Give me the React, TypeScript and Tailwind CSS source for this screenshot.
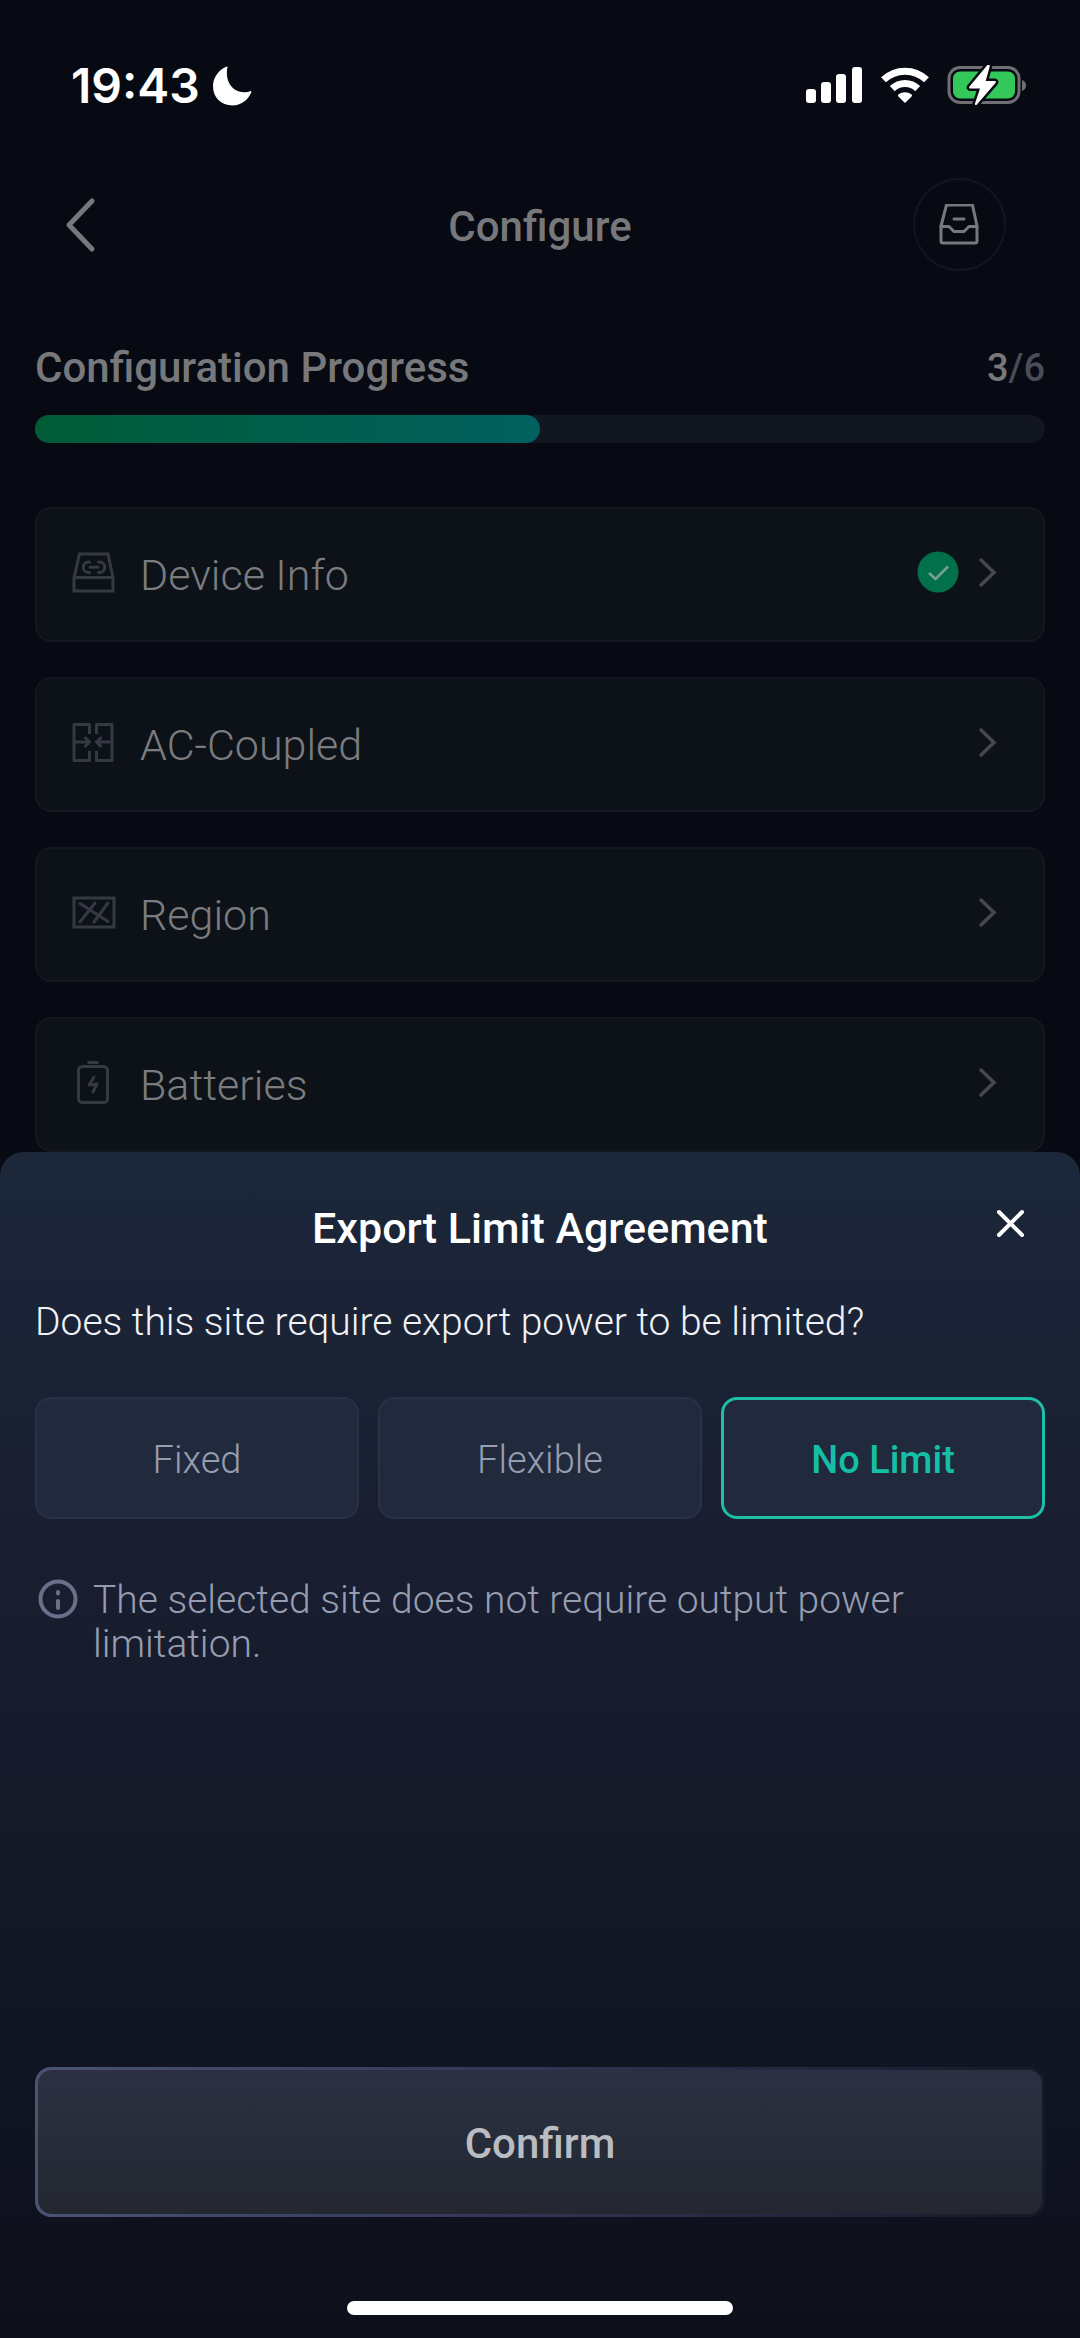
import { useState } from "react";
import type { ReactNode } from "react";
import clsx from "clsx";

const steps = [
	{ label: "Device Info", icon: <DeviceIcon />, done: true },
	{ label: "AC-Coupled", icon: <CoupledIcon />, done: false },
	{ label: "Region", icon: <RegionIcon />, done: false },
	{ label: "Batteries", icon: <BatteryIcon />, done: false },
];

const limits = ["Fixed", "Flexible", "No Limit"];

function StatusBar() {
	return (
		<div className="flex items-center justify-between pt-14 pl-[71px] pr-[53px] h-[116px] text-white">
			<div className="flex items-center gap-3">
				<span className="font-[Inter,sans-serif] text-[48px] leading-[60px] font-semibold">
					19:43
				</span>
				<svg width="40" height="40" viewBox="0 0 40 40" aria-label="Do not disturb">
					<path
						d="M15.5 1C13 13 18 25.5 32 26.3c2.500 0 4.500-.5 6-1.100 1-.3 1.600.3 1.200 1.300C36 34 29 39.500 20.500 39.500 9 39.500 1 31 1 20.500 1 12 6 4.500 13.600 1c1.200-.6 2.200-.9 1.900 0z"
						fill="currentColor"
					/>
				</svg>
			</div>
			<div className="flex items-center gap-4">
				<svg width="58" height="40" viewBox="0 0 58 40" fill="currentColor" aria-label="Signal">
					<rect x="1" y="23" width="10" height="14" rx="3" />
					<rect x="16" y="16" width="10" height="21" rx="3" />
					<rect x="31" y="8" width="10" height="29" rx="3" />
					<rect x="47" y="1" width="10" height="36" rx="3" />
				</svg>
				<svg width="52" height="40" viewBox="-1 0 52 40" aria-label="Wi-Fi">
					<g fill="none" stroke="currentColor" strokeWidth="7">
						<path d="M3.500 13.800a31 31 0 0 1 43 0" />
						<path d="M12.300 22.600a18.500 18.500 0 0 1 25.400 0" />
					</g>
					<path
						d="M25 37l-6.600-6.600c-.6-.6-.6-1.300 0-1.800a10.500 10.500 0 0 1 13.200 0c.6.5.6 1.200 0 1.800z"
						fill="currentColor"
					/>
				</svg>
				<svg width="80" height="42" viewBox="0 0 80 42" aria-label="Battery charging">
					<rect x="2" y="2.500" width="70" height="35" rx="11" fill="none" stroke="#6f6f74" strokeWidth="3" />
					<path d="M75 15c3 1 4 3 4 5.500s-1 4.500-4 5.500z" fill="#6f6f74" />
					<rect x="6" y="6.500" width="62" height="27" rx="7" fill="#34c759" />
					<path
						d="M40 .5L22.500 21.500c-.8 1-.4 2 .8 2H33l-5 15c-.5 1.500.9 2.200 1.900 1L48.500 18c.8-1 .4-2-.8-2h-9l4-14.500c.4-1.600-1.500-2.500-2.700-1z"
						fill="#fff"
						stroke="#070a12"
						strokeWidth="5"
						paintOrder="stroke"
						strokeLinejoin="round"
					/>
				</svg>
			</div>
		</div>
	);
}

function StepIcon({ children }: { children: ReactNode }) {
	return (
		<svg
			width="48"
			height="48"
			viewBox="0 0 48 48"
			fill="none"
			stroke="#353944"
			strokeWidth="3"
			aria-hidden="true"
		>
			{children}
		</svg>
	);
}

function DeviceIcon() {
	return (
		<StepIcon>
			<path d="M9.500 3h28.500l5 24v13H4V27z M4 26.500h39" />
			<path
				d="M19.500 11h-1a5 5 0 0 0 0 10.500h1M28.500 11h1a5 5 0 0 1 0 10.500h-1M20 16.200h8"
				strokeLinecap="round"
			/>
		</StepIcon>
	);
}

function CoupledIcon() {
	return (
		<StepIcon>
			<path
				d="M19.500 13V3.500H4v36h15.500v-9.500M26.500 13V3.500H42v36H26.500v-9.500M4 21h15M42 21H27M14.500 16L19.500 21l-5 5M31.500 16L26.500 21l5 5"
				strokeLinejoin="round"
			/>
		</StepIcon>
	);
}

function RegionIcon() {
	return (
		<StepIcon>
			<path d="M4 7h40v29H4z" />
			<path d="M10 12.500l28 18M25 12L10 31M38 12L24 31" strokeLinecap="round" />
		</StepIcon>
	);
}

function BatteryIcon() {
	return (
		<StepIcon>
			<rect x="8.500" y="5.500" width="29" height="36" rx="4" />
			<path d="M17.500 1.500h11" />
			<path d="M24 16l-5 8 8-1-4 8" strokeLinecap="round" strokeLinejoin="round" />
		</StepIcon>
	);
}

export default function App() {
	const [limit, setLimit] = useState("No Limit");

	return (
		<div className="flex flex-col min-h-screen bg-[#070a12] font-[Roboto,sans-serif]">
			<StatusBar />

			<header className="flex items-center justify-between pt-[62px] pl-[57px] pr-[74px] text-[#77787b]">
				<button type="button" aria-label="Back" className="w-[110px]">
					<svg width="48" height="60" viewBox="0 0 48 60" fill="none">
						<path
							d="M35 6L12 30l23 24"
							stroke="currentColor"
							strokeWidth="5"
							strokeLinecap="round"
							strokeLinejoin="round"
						/>
					</svg>
				</button>
				<h1 className="pt-1 text-[42px] leading-[48px] font-medium">Configure</h1>
				<button
					type="button"
					aria-label="Inbox"
					className="flex items-center justify-center size-[93px] border-2 border-[#121520] rounded-full"
				>
					<svg width="42" height="42" viewBox="1 1 42 42" fill="none" stroke="currentColor" strokeWidth="3" strokeLinecap="round" strokeLinejoin="round">
						<path d="M8.500 2h26l4.500 21v15a2 2 0 0 1-2 2H5a2 2 0 0 1-2-2V23z" />
						<path d="M3 23.500h8l5 5h10l5-5h8M16 16h10" />
					</svg>
				</button>
			</header>

			<main className="px-[35px] pt-[68px]">
				<div className="flex items-center justify-between h-[58px] font-medium text-[#77787b]">
					<h2 id="progress" className="text-[42px] leading-[48px]">
						Configuration Progress
					</h2>
					<p className="text-[38px] leading-[48px] text-[#4a4d55]">
						<span className="text-[#77787b]">3</span>/6
					</p>
				</div>
				<div
					role="progressbar"
					aria-labelledby="progress"
					aria-valuenow={3}
					aria-valuemax={6}
					className="h-7 mt-[18px] rounded-full bg-[#121620]"
				>
					<div className="w-1/2 h-full rounded-full bg-linear-to-r from-[#005c36] to-[#02605f]"></div>
				</div>

				<div className="flex flex-col gap-[35px] pt-16">
					{steps.map((step) => (
						<button
							key={step.label}
							type="button"
							className="flex items-center h-[135px] pl-[33px] pr-[42px] text-left border-2 border-[#131721] rounded-2xl bg-[#0d1218]"
						>
							{step.icon}
							<span className="flex-1 pl-[22px] text-[43px] leading-[48px] font-light text-[#7b7c7f]">
								{step.label}
							</span>
							{step.done && (
								<svg width="42" height="48" viewBox="0 0 42 48" fill="none" aria-label="Done">
									<circle cx="21" cy="21" r="20.500" fill="#02704a" />
									<path d="M12 22l6.500 6L31 15.500" stroke="#77a091" strokeWidth="2.500" />
								</svg>
							)}
							<svg width="42" height="48" viewBox="0 0 42 48" fill="none" aria-hidden="true">
								<path d="M22 9l13 12.500L22 34" stroke="#45484f" strokeWidth="3.500" strokeLinecap="round" />
							</svg>
						</button>
					))}
				</div>
			</main>

			<section
				role="dialog"
				aria-labelledby="sheet-title"
				className="flex flex-col flex-1 px-[35px] rounded-t-3xl bg-linear-to-b from-[#1c273a] via-[#191e30] via-35% to-[#0d101b]"
			>
				<div className="flex items-center justify-between pt-12">
					<span className="w-[58px]"></span>
					<h2 id="sheet-title" className="text-[43px] leading-[56px] font-medium text-white">
						Export Limit Agreement
					</h2>
					<button type="button" aria-label="Close" className="w-[58px]">
						<svg width="48" height="50" viewBox="0 0 48 50" fill="none">
							<path
								d="M12 9l23 23M35 9L12 32"
								stroke="#fff"
								strokeWidth="4"
								strokeLinecap="round"
							/>
						</svg>
					</button>
				</div>

				<p className="pt-11 text-[39px] leading-[44px] font-light text-[#f1f2f5]">
					Does this site require export power to be limited?
				</p>

				<div className="grid grid-cols-3 gap-[19px] pt-[53px]">
					{limits.map((name) => (
						<button
							key={name}
							type="button"
							aria-pressed={limit === name}
							onClick={() => setLimit(name)}
							className={clsx(
								"h-[122px] pt-1 text-[38px] leading-[44px] rounded-2xl bg-[#21293c]",
								limit === name
									? "border-3 border-[#1dbfa6] font-medium text-[#14bfa5]"
									: "border-2 border-[#29304a] font-light text-[#979db0]"
							)}
						>
							{name}
						</button>
					))}
				</div>

				<div className="flex gap-[14px] pt-[59px]">
					<svg className="shrink-0" width="44" height="44" viewBox="0 0 44 44" fill="none" stroke="#6b708a" aria-hidden="true">
						<circle cx="23" cy="21" r="17.500" strokeWidth="4" />
						<path d="M23 14v1.500M23 23v7" strokeWidth="4" strokeLinecap="round" />
					</svg>
					<p className="max-w-[860px] text-[39px] leading-[44px] font-light text-[#979db0]">
						The selected site does not require output power limitation.
					</p>
				</div>

				{/* the gradient outline fades out towards the right edge */}
				<div className="h-[150px] mt-auto p-[3px] rounded-2xl bg-linear-to-r from-[#4b5373] via-[#303653] to-[#151a28]">
					<button
						type="button"
						className="w-full h-full pt-1 text-[42px] leading-[56px] font-medium text-[#b9bcc3] rounded-[14px] bg-linear-to-b from-[#2d3042] via-[#262d39] to-[#242731]"
					>
						Confirm
					</button>
				</div>

				<div className="w-[386px] h-[14px] mx-auto mt-[84px] mb-[23px] rounded-full bg-white"></div>
			</section>
		</div>
	);
}
